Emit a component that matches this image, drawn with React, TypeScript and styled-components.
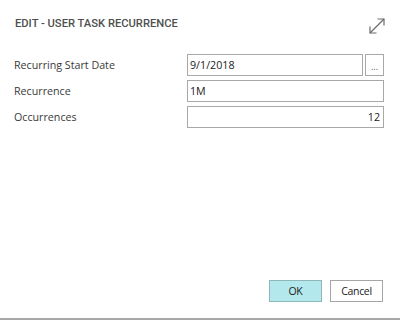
import React from 'react'
import styled, { createGlobalStyle } from 'styled-components'

const Global = createGlobalStyle`
  html, body {
    margin: 0;
    padding: 0;
    background: #ffffff;
  }
  #root {
    width: 400px;
    height: 320px;
  }
`

const App = () => {
  return (
    <>
      <Global />
      <Dialog>
        <Header>
          <Title>EDIT - USER TASK RECURRENCE</Title>
          <Expand>
            <svg width="18" height="18" viewBox="0 0 18 18" fill="none" stroke="#6b6b6b" strokeWidth="1.2">
              <path d="M2 16 L16 2" />
              <path d="M9.5 2 H16 V8.5" />
              <path d="M2 9.5 V16 H8.5" />
            </svg>
          </Expand>
        </Header>
        <Form>
          <Label>Recurring Start Date</Label>
          <Field>
            <Input>9/1/2018</Input>
            <Lookup>...</Lookup>
          </Field>
          <Label>Recurrence</Label>
          <Field>
            <Input>1M</Input>
          </Field>
          <Label>Occurrences</Label>
          <Field>
            <Input $right>12</Input>
          </Field>
        </Form>
        <Footer>
          <Button $primary>OK</Button>
          <Button>Cancel</Button>
        </Footer>
      </Dialog>
    </>
  )
}

export default App

const Dialog = styled.div`
  width: 400px;
  height: 320px;
  box-sizing: border-box;
  display: flex;
  flex-direction: column;
  border-bottom: 2px solid #a8a8a8;
  font-family: "Open Sans", "Noto Sans", sans-serif;
  color: #333333;
`
const Header = styled.div`
  display: flex;
  align-items: center;
  justify-content: space-between;
  padding: 12px 15px 0 15px;
  height: 20px;
`
const Title = styled.div`
  font-family: Roboto, "Liberation Sans", sans-serif;
  font-weight: 500;
  font-size: 11.2px;
  letter-spacing: 0;
  color: #4f4f4f;
  padding-top: 2px;
`
const Expand = styled.div`
  display: flex;
  padding-top: 8px;
  margin-right: -1px;
`
const Form = styled.div`
  display: grid;
  grid-template-columns: 173px 197px;
  row-gap: 4px;
  align-items: center;
  padding: 22px 0 0 14px;
`
const Label = styled.div`
  font-size: 10.7px;
  color: #3a3a3a;
`
const Field = styled.div`
  display: flex;
  gap: 2px;
`
const Input = styled.div<{ $right?: boolean }>`
  flex: 1;
  height: 22px;
  box-sizing: border-box;
  border: 1px solid #a8a8a8;
  padding: 0 3px 0 2px;
  display: flex;
  align-items: center;
  justify-content: ${p => (p.$right ? 'flex-end' : 'flex-start')};
  font-size: 10.7px;
  color: #222222;
`
const Lookup = styled.div`
  width: 19px;
  height: 22px;
  box-sizing: border-box;
  border: 1px solid #a8a8a8;
  display: flex;
  align-items: center;
  justify-content: center;
  font-size: 9px;
  color: #555555;
  padding-top: 2px;
`
const Footer = styled.div`
  margin-top: auto;
  display: flex;
  justify-content: flex-end;
  gap: 8px;
  padding: 0 17px 16px 0;
`
const Button = styled.div<{ $primary?: boolean }>`
  width: 53px;
  height: 22px;
  box-sizing: border-box;
  display: flex;
  align-items: center;
  justify-content: center;
  font-size: 10.5px;
  letter-spacing: -0.3px;
  color: #222222;
  background: ${p => (p.$primary ? '#b3e8ec' : '#ffffff')};
  border: 1px solid ${p => (p.$primary ? '#8fb6b9' : '#a6a6a6')};
`
